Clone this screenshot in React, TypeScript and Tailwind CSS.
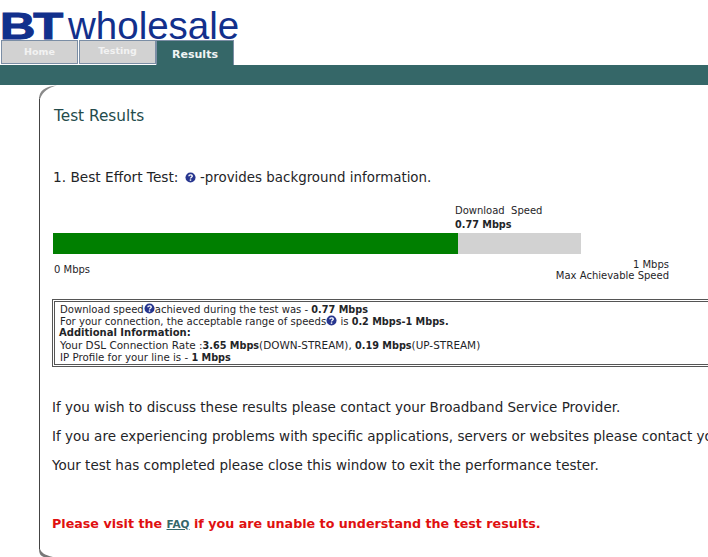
import React from "react";

const Help = ({ className = "" }: { className?: string }) => (
  <svg viewBox="0 0 12 12" width="11" height="11" className={`inline-block align-[-1px] ${className}`}>
    <circle cx="6" cy="6" r="5.5" fill="#27368f" />
    <path d="M4.2 4.6 C4.2 2.6 7.9 2.6 7.9 4.5 C7.9 5.7 6 5.7 6 7.1" fill="none" stroke="white" strokeWidth="1.5" />
    <rect x="5.2" y="8" width="1.6" height="1.6" fill="white" />
  </svg>
);

const App: React.FC = () => {
  return (
    <div className="w-[708px] h-[557px] overflow-hidden bg-white font-['DejaVu_Sans',sans-serif] text-[#1f2528]">
      {/* Logo */}
      <div className="h-[40px] flex items-end font-['Liberation_Sans',sans-serif] text-[#12308c]">
        <span className="w-[68px] text-[36px] leading-[26px] font-bold tracking-[-1.5px] origin-left scale-x-[1.36] [-webkit-text-stroke:1px_#12308c]">BT</span>
        <span className="text-[38.5px] leading-[28px] origin-left">wholesale</span>
      </div>

      {/* Tabs */}
      <div className="h-[25px] flex pl-[1px] font-bold">
        <div className="w-[77px] h-[24px] bg-[#d2d2d2] border border-[#7b8ea5] text-[#f2f2f2] text-[9.5px] flex justify-center pt-[4px]">Home</div>
        <div className="ml-[1px] w-[77px] h-[24px] bg-[#d2d2d2] border border-[#7b8ea5] text-[#f2f2f2] text-[9.5px] flex justify-center pt-[3px]">Testing</div>
        <div className="w-[78px] h-[25px] bg-[#356768] border border-b-0 border-[#7b8ea5] text-[#f0f4f4] text-[11px] flex justify-center pt-[6px]">Results</div>
      </div>

      {/* Teal band */}
      <div className="h-[20px] bg-[#356768]" />

      {/* Panel */}
      <div className="relative ml-[39px] h-[472px] pl-[14px] whitespace-nowrap">
        <div className="absolute left-0 top-[12px] bottom-[7px] w-px bg-[#444]" />
        <svg width="18" height="14" viewBox="0 0 18 14" className="absolute left-0 top-0">
          <path d="M0 14 C0 6 6 1 18 0.5 C10 2.5 4 6 1 14 Z" fill="#8a8a8a" />
        </svg>
        <svg width="16" height="8" viewBox="0 0 16 8" className="absolute left-0 bottom-0">
          <path d="M0 0 C0 3 2 6 4 7 C7 8 12 8 16 8 L6 8 C3 8 0 6 0 0 Z M0 0 L1 0 C2 3 5 6 14 8 L6 8 C3 7 0 4 0 0 Z" fill="#777" />
        </svg>

        <h1 className="ml-[1px] pt-[22px] h-[40px] text-[15.3px] leading-[18px] font-normal text-[#244b4b]">Test Results</h1>

        <p className="mt-[44px] h-[16px] text-[13.4px] leading-[16px]">
          <span className="text-[13.7px]">1. Best Effort Test:</span> <Help className="ml-[2px]" /> -provides background information.
        </p>

        {/* Speed bar */}
        <div className="relative mt-[19px] h-[70px] text-[10px] leading-[14px]">
          <div className="absolute left-[402px] top-0">
            <div>Download&nbsp; Speed</div>
            <div className="font-bold text-[9.7px]">0.77 Mbps</div>
          </div>
          <div className="absolute left-0 top-[29px] w-[528px] h-[21px] bg-[#d2d2d2]">
            <div className="w-[405px] h-full bg-[#007f00]" />
          </div>
          <div className="absolute left-[1px] top-[59px]">0 Mbps</div>
          <div className="absolute left-[416px] top-[55px] w-[200px] text-right leading-[11px]">
            <div>1 Mbps</div>
            <div>Max Achievable Speed</div>
          </div>
        </div>

        {/* Info box */}
        <div className="mt-[25px] -ml-[1px] w-[700px] h-[68px] border-[3px] border-double border-[#555] pl-[5px] pt-[1px] text-[10.08px] leading-[12px] [&_b]:text-[9.7px]">
          <div className="h-[12px]">Download speed<Help />achieved during the test was - <b>0.77 Mbps</b></div>
          <div className="h-[12px]">For your connection, the acceptable range of speeds<Help /> is <b>0.2 Mbps-1 Mbps.</b></div>
          <div className="h-[12px] font-bold text-[10px] -ml-px">Additional Information:</div>
          <div className="h-[12px] text-[10.45px]">Your DSL Connection Rate :<b>3.65 Mbps</b>(DOWN-STREAM), <b>0.19 Mbps</b>(UP-STREAM)</div>
          <div className="h-[12px] text-[10.25px]">IP Profile for your line is - <b>1 Mbps</b></div>
        </div>

        <div className="mt-[32px] -ml-[1px] flex flex-col gap-[13px] text-[13.5px] leading-[16px]">
          <p>If you wish to discuss these results please contact your Broadband Service Provider.</p>
          <p>If you are experiencing problems with specific applications, servers or websites please contact your</p>
          <p>Your test has completed please close this window to exit the performance tester.</p>
        </div>

        <p className="mt-[43px] -ml-[1px] text-[12.7px] leading-[16px] font-bold text-[#e01010]">
          Please visit the <a className="text-[10.5px] text-[#356768] underline">FAQ</a> if you are unable to understand the test results.
        </p>
      </div>
    </div>
  );
};

export default App;
